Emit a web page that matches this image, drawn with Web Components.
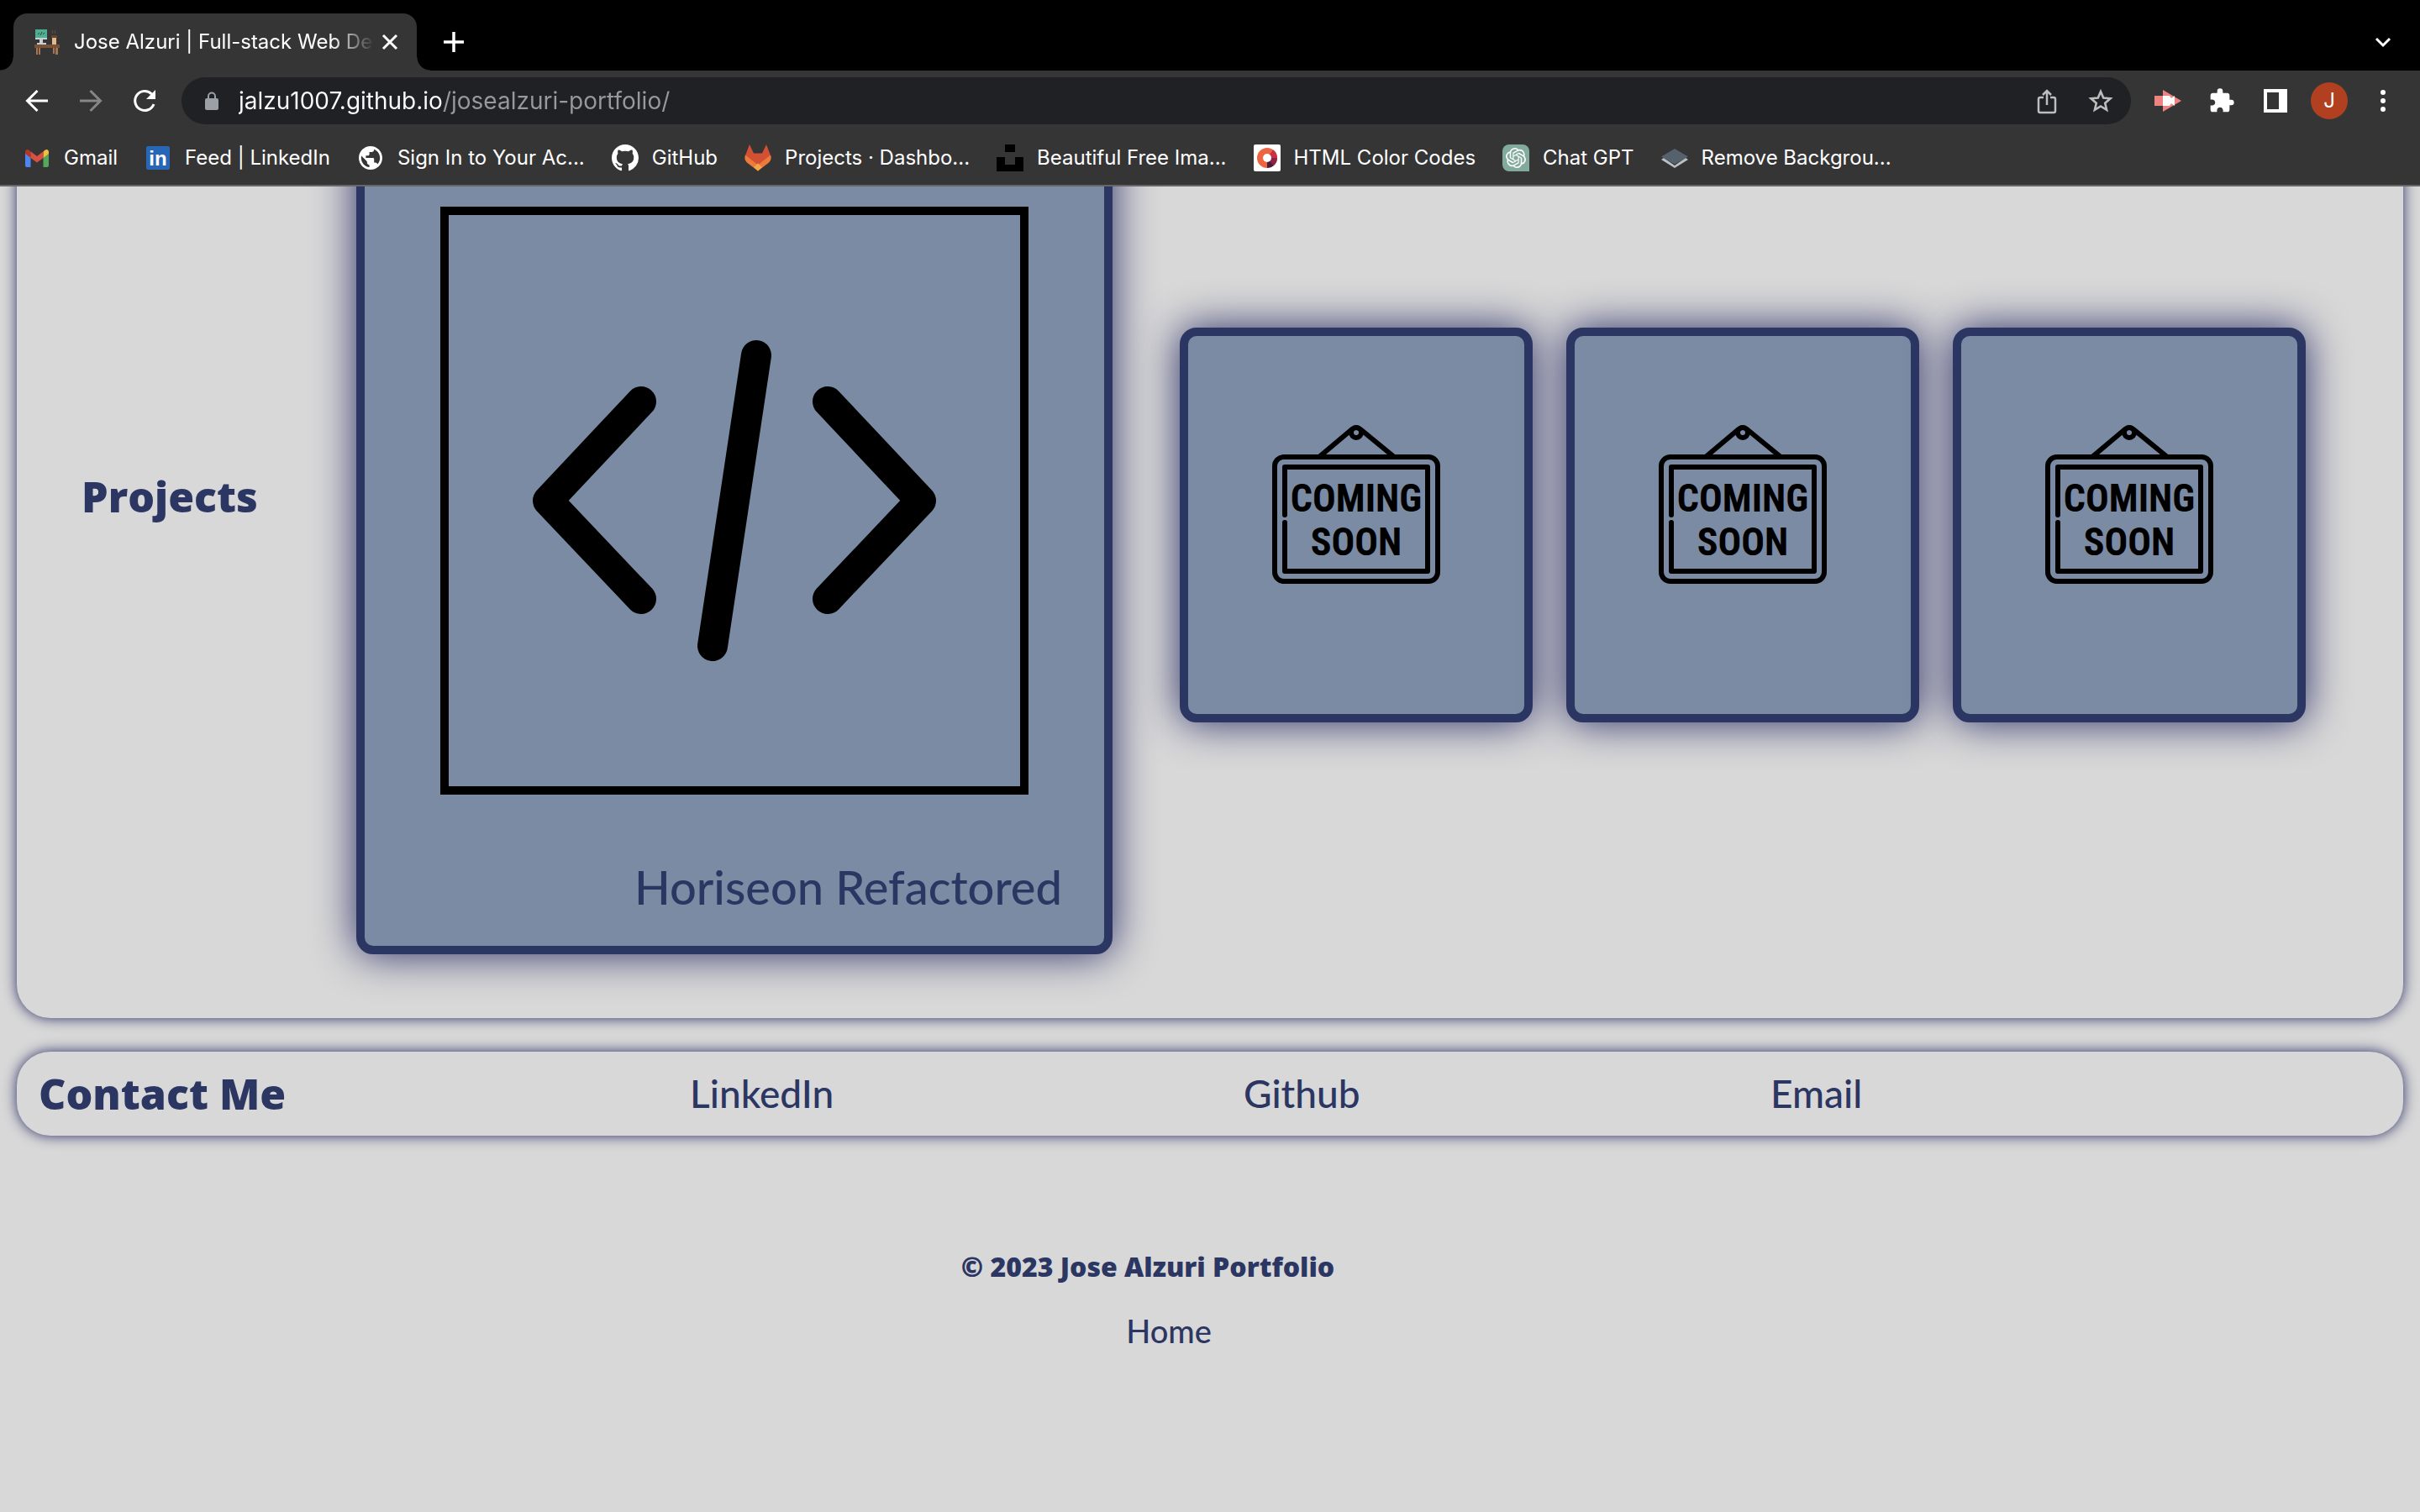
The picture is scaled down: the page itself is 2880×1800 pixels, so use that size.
<!DOCTYPE html>
<html lang="en">
<head>
<meta charset="utf-8">
<title>Jose Alzuri | Full-stack Web Developer</title>
<style>
  html, body { margin: 0; height: 100%; }
  body { font-family: Inter, "Liberation Sans", sans-serif; background: #d8d8d8; }
</style>
</head>
<body>
<browser-window>
  <tab-strip slot="chrome"></tab-strip>
  <browser-toolbar slot="chrome"></browser-toolbar>
  <bookmark-bar slot="chrome">
    <bookmark-link label="Gmail">
      <svg width="32" height="32" viewBox="0 0 32 32"><path fill="#4e86ee" d="M2 9l6.500 5v13H4a2 2 0 0 1-2-2z"/><path fill="#56a75b" d="M30 9l-6.500 5v13H28a2 2 0 0 0 2-2z"/><path fill="#f3bf42" d="M23.500 8.500l2-1.700C27.500 5.200 30 6.500 30 9v2l-6.500 5z"/><path fill="#b53629" d="M8.500 8.500l-2-1.700C4.500 5.200 2 6.500 2 9v2l6.500 5z"/><path fill="#d8503f" d="M8.500 8.300L16 14l7.500-5.700V16L16 21.600 8.500 16z"/></svg>
    </bookmark-link>
    <bookmark-link label="Feed | LinkedIn">
      <svg width="32" height="32" viewBox="0 0 32 32"><rect x="2" y="2" width="28" height="28" rx="2" fill="#2867b8"/><text x="16" y="25" text-anchor="middle" font-family="Liberation Sans, sans-serif" font-weight="700" font-size="24" fill="#fff">in</text></svg>
    </bookmark-link>
    <bookmark-link label="Sign In to Your Ac...">
      <svg width="32" height="32" viewBox="0.570 0.570 22.860 22.860"><path fill="#fff" d="M12 2C6.480 2 2 6.480 2 12s4.480 10 10 10 10-4.480 10-10S17.520 2 12 2zm-1 17.930c-3.950-.490-7-3.850-7-7.930 0-.620.080-1.210.210-1.790L9 15v1c0 1.100.900 2 2 2v1.930zm6.900-2.540c-.260-.810-1-1.390-1.900-1.390h-1v-3c0-.550-.450-1-1-1H8v-2h2c.550 0 1-.450 1-1V7h2c1.100 0 2-.900 2-2v-.410c2.930 1.190 5 4.060 5 7.410 0 2.080-.800 3.970-2.100 5.390z"/></svg>
    </bookmark-link>
    <bookmark-link label="GitHub">
      <svg width="32" height="32" viewBox="0 0 16 16"><path fill="#fff" d="M8 0C3.580 0 0 3.580 0 8c0 3.540 2.290 6.530 5.470 7.590.4.070.55-.17.55-.38 0-.19-.01-.82-.01-1.490-2.010.37-2.530-.49-2.690-.94-.09-.23-.48-.94-.82-1.130-.28-.15-.68-.52-.01-.53.63-.01 1.080.58 1.230.82.72 1.210 1.870.87 2.330.66.070-.52.280-.87.510-1.070-1.780-.2-3.640-.89-3.640-3.950 0-.87.310-1.590.820-2.150-.08-.2-.36-1.020.080-2.120 0 0 .67-.21 2.200.82.640-.18 1.320-.27 2-.27s1.360.09 2 .27c1.530-1.040 2.200-.82 2.200-.82.440 1.100.160 1.920.080 2.120.510.560.820 1.270.820 2.150 0 3.070-1.870 3.750-3.650 3.950.290.250.540.730.540 1.480 0 1.070-.01 1.930-.01 2.200 0 .210.150.460.550.380A8.010 8.010 0 0 0 16 8c0-4.420-3.580-8-8-8z"/></svg>
    </bookmark-link>
    <bookmark-link label="Projects · Dashbo...">
      <svg width="32" height="32" viewBox="0 0 32 32"><path fill="#d35033" d="M6 0l5 10.500h10L26 0l5 13L16 24 1 13z"/><path fill="#ed7a3a" d="M1 12.500c-1.500 4 0 7.500 2.500 9.500L16 31.500 28.500 22c2.500-2 4-5.500 2.500-9.500L16 24z"/><path fill="#d35033" d="M6 12h20L16 24z"/><path fill="#f3a64a" d="M16 22.500l5 4.500-5 4.500-5-4.500z"/></svg>
    </bookmark-link>
    <bookmark-link label="Beautiful Free Ima...">
      <svg width="32" height="32" viewBox="0 0 32 32"><path d="M10 0h12v9H10zM0 15h10v9h12v-9h10v17H0z"/></svg>
    </bookmark-link>
    <bookmark-link label="HTML Color Codes">
      <svg width="32" height="32" viewBox="0 0 32 32"><rect width="32" height="32" rx="2" fill="#fff"/><circle cx="16" cy="16" r="12" fill="#ec6440"/><path fill="#c93046" d="M16 16l7-9.700A12 12 0 0 1 28 16z"/><path fill="#8c2343" d="M16 16h12a12 12 0 0 1-4 9z"/><path fill="#4b1a3f" d="M16 16l8 9a12 12 0 0 1-8 3z"/><circle cx="16" cy="16" r="5" fill="#fff"/></svg>
    </bookmark-link>
    <bookmark-link label="Chat GPT">
      <svg width="32" height="32" viewBox="0 0 32 32"><path fill="#82aa9d" d="M8 0h16a8 8 0 0 1 8 8v24H8a8 8 0 0 1-8-8V8a8 8 0 0 1 8-8z"/><path transform="translate(4 4)" fill="#fff" d="M22.2819 9.8211a5.9847 5.9847 0 0 0-.5157-4.9108 6.0462 6.0462 0 0 0-6.5098-2.9A6.0651 6.0651 0 0 0 4.9807 4.1818a5.9847 5.9847 0 0 0-3.9977 2.9 6.0462 6.0462 0 0 0 .7427 7.0966 5.98 5.98 0 0 0 .511 4.9107 6.051 6.051 0 0 0 6.5146 2.9001A5.9847 5.9847 0 0 0 13.2599 24a6.0557 6.0557 0 0 0 5.7718-4.2058 5.9894 5.9894 0 0 0 3.9977-2.9001 6.0557 6.0557 0 0 0-.7475-7.0729zm-9.022 12.6081a4.4755 4.4755 0 0 1-2.8764-1.0408l.1419-.0804 4.7783-2.7582a.7948.7948 0 0 0 .3927-.6813v-6.7369l2.02 1.1686a.071.071 0 0 1 .038.052v5.5826a4.504 4.504 0 0 1-4.4945 4.4944zm-9.6607-4.1254a4.4708 4.4708 0 0 1-.5346-3.0137l.142.0852 4.783 2.7582a.7712.7712 0 0 0 .7806 0l5.8428-3.3685v2.3324a.0804.0804 0 0 1-.0332.0615L9.74 19.9502a4.4992 4.4992 0 0 1-6.1408-1.6464zM2.3408 7.8956a4.485 4.485 0 0 1 2.3655-1.9728V11.6a.7664.7664 0 0 0 .3879.6765l5.8144 3.3543-2.0201 1.1685a.0757.0757 0 0 1-.071 0l-4.8303-2.7865A4.504 4.504 0 0 1 2.3408 7.872zm16.5963 3.8558L13.1038 8.364 15.1192 7.2a.0757.0757 0 0 1 .071 0l4.8303 2.7913a4.4944 4.4944 0 0 1-.6765 8.1042v-5.6772a.79.79 0 0 0-.407-.667zm2.0107-3.0231l-.142-.0852-4.7735-2.7818a.7759.7759 0 0 0-.7854 0L9.409 9.2297V6.8974a.0662.0662 0 0 1 .0284-.0615l4.8303-2.7866a4.4992 4.4992 0 0 1 6.6802 4.66zM8.3065 12.863l-2.02-1.1638a.0804.0804 0 0 1-.038-.0567V6.0742a4.4992 4.4992 0 0 1 7.3757-3.4537l-.142.0805L8.704 5.459a.7948.7948 0 0 0-.3927.6813zm1.0976-2.3654l2.602-1.4998 2.6069 1.4998v2.9994l-2.5974 1.4997-2.6067-1.4997Z"/></svg>
    </bookmark-link>
    <bookmark-link label="Remove Backgrou...">
      <svg width="32" height="32" viewBox="0 0 32 32"><path fill="#b9bfc4" d="M0 18l3-2 13 9 13-9 3 2-16 10z"/><path fill="#56616e" d="M16 5l16 9.500L16 23.500 0 14.500z"/></svg>
    </bookmark-link>
  </bookmark-bar>

  <project-section heading="Projects">
    <project-card size="large" caption="Horiseon Refactored">
      <svg viewBox="0 0 700 700" role="img" aria-label="Code">
        <rect x="5" y="5" width="690" height="690" fill="none" stroke="#000" stroke-width="10"/>
        <path d="M239 232L128 350l111 117M461 232l111 118-111 117M376 177l-52 346" fill="none" stroke="#000" stroke-width="36" stroke-linecap="round" stroke-linejoin="round"/>
      </svg>
    </project-card>
    <project-card><coming-soon-sign></coming-soon-sign></project-card>
    <project-card><coming-soon-sign></coming-soon-sign></project-card>
    <project-card><coming-soon-sign></coming-soon-sign></project-card>
  </project-section>
  <contact-section heading="Contact Me">
    <a href="#linkedin">LinkedIn</a>
    <a href="#github">Github</a>
    <a href="#email">Email</a>
  </contact-section>
  <site-footer>
    <span>© 2023 Jose Alzuri Portfolio</span>
    <a slot="link" href="#home">Home</a>
  </site-footer>
</browser-window>

<script>
const define = (name, html, setup) => {
  const template = document.createElement('template');
  template.innerHTML = html;
  customElements.define(name, class extends HTMLElement {
    constructor() {
      super();
      this.attachShadow({ mode: 'open' }).append(template.content.cloneNode(true));
    }
    connectedCallback() { if (setup) setup(this, this.shadowRoot); }
  });
};

define('browser-window', `
<style>
  :host { display: flex; flex-direction: column; height: 100vh; overflow: hidden; background: #d8d8d8;
    --navy: #2b3663; --steel: #7a8ba3; --shade: #2b2f66;
    --page-font: Lato, "Liberation Sans", sans-serif; --heading-font: "Open Sans", "Liberation Sans", sans-serif; }
  header { flex: none; border-bottom: 2px solid #666; background: #353535; color: #fff; }
  main { flex: 1; min-height: 0; overflow: hidden; color: var(--navy); font-family: var(--page-font); font-weight: 500; }
</style>
<header><slot name="chrome"></slot></header>
<main><slot></slot></main>`);

define('tab-strip', `
<style>
  :host { display: flex; align-items: flex-end; height: 84px; background: #000; }
  .foot { flex: none; width: 16px; height: 16px; background: radial-gradient(circle at 0 0, #000 15px, #353535 16px); }
  .foot.right { background: radial-gradient(circle at 100% 0, #000 15px, #353535 16px); }
  .tab { display: flex; align-items: center; box-sizing: border-box; width: 480px; height: 68px; padding: 0 20px 0 24px; border-radius: 16px 16px 0 0; background: #353535; }
  .title { flex: 1; margin: 0 4px 0 16px; white-space: nowrap; font-size: 24px; line-height: 32px;
    mask-image: linear-gradient(90deg, #000 305px, transparent 358px); }
  button { display: flex; align-items: center; justify-content: center; padding: 0; border: 0; background: none; color: #fff; }
  .close { width: 24px; height: 24px; }
  .new, .search { width: 56px; height: 68px; }
  .search { margin: 0 16px 0 auto; }
</style>
<span class="foot"></span>
<div class="tab">
  <svg width="32" height="32" viewBox="0 0 32 32"><rect x="2" y="1" width="14" height="10" fill="#4fae91"/><path d="M5 7l2-2M8 8l2-4M11 7l2-2" stroke="#23483d" fill="none"/><path fill="#c9ced3" d="M2 11h14v2H2zM7 13h4v4H7zM4 17h11v2H4z"/><rect x="22" y="9" width="5" height="10" fill="#e0b98c"/><path fill="#6d4327" d="M21 8h7v3h-7z"/><path d="M23 2q-2 2 0 4M26 2q-2 2 0 4" stroke="#555" fill="none"/><path fill="#7b5236" d="M1 19h30v4H1z"/><path fill="#a67652" d="M3 23h2v8H3zM6 23h2v8H6zM23 23h2v7h-2zM26 23h3v8h-3z"/></svg>
  <span class="title">Jose Alzuri | Full-stack Web De</span>
  <button class="close" aria-label="Close tab"><svg width="24" height="24" viewBox="0 0 24 24"><path d="M4 4l16 16M20 4L4 20" stroke="currentColor" stroke-width="3"/></svg></button>
</div>
<span class="foot right"></span>
<button class="new" aria-label="New tab"><svg width="28" height="28" viewBox="0 0 28 28"><path d="M14 2v24M2 14h24" stroke="currentColor" stroke-width="3.500"/></svg></button>
<button class="search" aria-label="Search tabs"><svg width="24" height="24" viewBox="0 0 24 24"><path d="M4 8l8 8 8-8" fill="none" stroke="currentColor" stroke-width="3"/></svg></button>`);

define('browser-toolbar', `
<style>
  :host { display: flex; align-items: center; height: 72px; padding: 0 12px; }
  button { flex: none; display: flex; align-items: center; justify-content: center; width: 64px; height: 64px; padding: 0; border: 0; background: none; color: #fff; font: 24px/32px Inter, sans-serif; }
  .forward { color: #868686; }
  form { flex: 1; display: flex; align-items: center; height: 56px; margin: 0 12px; border-radius: 28px; background: #202124; }
  form .lock { margin: 0 22px 0 26px; }
  form button { color: #bdbdbd; height: 56px; }
  form button:last-child { margin-right: 4px; }
  input { flex: 1; min-width: 0; height: 40px; padding: 0; border: 0; outline: 0; font: 28px/40px Inter, sans-serif;
    color: #fff; -webkit-text-fill-color: transparent; background: linear-gradient(90deg, #fff 244px, #97999c 244px); background-clip: text; -webkit-background-clip: text; }
  .avatar span { width: 44px; height: 44px; border-radius: 50%; background: #b04020; line-height: 44px; }
</style>
<button aria-label="Back"><svg width="32" height="32" viewBox="0 0 32 32"><path d="M29 16H5M16.500 4L4.500 16l12 12" fill="none" stroke="currentColor" stroke-width="3"/></svg></button>
<button class="forward" aria-label="Forward"><svg width="32" height="32" viewBox="0 0 32 32"><path d="M3 16h24M15.500 4l12 12-12 12" fill="none" stroke="currentColor" stroke-width="3"/></svg></button>
<button aria-label="Reload"><svg width="32" height="32" viewBox="0 0 32 32"><path d="M27 20A11.500 11.500 0 1 1 24.500 8" fill="none" stroke="currentColor" stroke-width="3"/><path d="M29 3v11H18z" fill="currentColor"/></svg></button>
<form>
  <svg class="lock" width="20" height="24" viewBox="0 0 20 24"><path fill="#9aa0a6" d="M4 9h12a2 2 0 0 1 2 2v10a2 2 0 0 1-2 2H4a2 2 0 0 1-2-2V11a2 2 0 0 1 2-2z"/><path d="M6 10V6.500a4 4 0 0 1 8 0V10" fill="none" stroke="#9aa0a6" stroke-width="2"/></svg>
  <input type="text" aria-label="Address" value="jalzu1007.github.io/josealzuri-portfolio/" spellcheck="false">
  <button type="button" aria-label="Share"><svg width="32" height="32" viewBox="0 0 32 32"><path d="M12 12H8a2 2 0 0 0-2 2v14a2 2 0 0 0 2 2h16a2 2 0 0 0 2-2V14a2 2 0 0 0-2-2h-4M16 21V4M11 9l5-5 5 5" fill="none" stroke="currentColor" stroke-width="2.500"/></svg></button>
  <button type="button" aria-label="Bookmark this page"><svg width="32" height="32" viewBox="0 0 32 32"><path d="M16 5l3.200 7.600 8.300.7-6.300 5.400 1.900 8.100-7.100-4.300-7.100 4.300 1.900-8.100-6.300-5.400 8.300-.7z" fill="none" stroke="currentColor" stroke-width="2.600"/></svg></button>
</form>
<button aria-label="Screen recorder"><svg width="32" height="32" viewBox="0 0 32 32"><path fill="#ee8481" d="M0 10h10V3l22 13-22 13v-7H0z"/><path fill="#fff" d="M10 10h8l2 3 4-3v12l-4-3-2 3h-8z"/></svg></button>
<button aria-label="Extensions"><svg width="32" height="32" viewBox="0 0 24 24"><path fill="currentColor" d="M20.500 11H19V7c0-1.100-.9-2-2-2h-4V3.500a2.500 2.500 0 0 0-5 0V5H4c-1.100 0-1.990.9-1.990 2v3.800H3.500c1.490 0 2.700 1.210 2.700 2.700s-1.210 2.700-2.700 2.700H2V20c0 1.100.9 2 2 2h3.800v-1.500c0-1.490 1.210-2.700 2.700-2.700s2.700 1.210 2.700 2.700V22H17c1.100 0 2-.9 2-2v-4h1.500a2.500 2.500 0 0 0 0-5z"/></svg></button>
<button aria-label="Side panel"><svg width="28" height="28" viewBox="0 0 28 28"><path fill="currentColor" fill-rule="evenodd" d="M0 0h28v28H0zM4 4v20h14V4z"/></svg></button>
<button class="avatar" aria-label="Profile"><span>J</span></button>
<button aria-label="Menu"><svg width="32" height="32" viewBox="0 0 32 32" fill="currentColor"><circle cx="16" cy="6" r="3"/><circle cx="16" cy="16" r="3"/><circle cx="16" cy="26" r="3"/></svg></button>`);

define('bookmark-bar', `
<style>:host { display: block; } nav { display: flex; align-items: center; gap: 32px; height: 64px; padding: 0 28px; }</style>
<nav aria-label="Bookmarks"><slot></slot></nav>`);

define('bookmark-link', `
<style>
  :host { display: block; }
  a { display: flex; align-items: center; gap: 16px; color: #fff; text-decoration: none; white-space: nowrap; font-size: 24px; line-height: 32px; }
  ::slotted(svg) { display: block; flex: none; }
</style>
<a href="#"><slot></slot><span></span></a>`, (host, root) => { root.querySelector('span').textContent = host.getAttribute('label'); });

define('project-section', `
<style>
  :host { display: block; margin: -184px 20px 0; }
  section { display: grid; grid-template-columns: 364px 940fr 420fr 420fr 420fr; column-gap: 40px; align-items: center; padding: 76px 116px 76px 0; border-radius: 40px; box-shadow: 0 0 16px var(--shade); background: #d8d8d8; }
  h2 { margin: 0 0 68px; text-align: center; font: 800 50px/60px var(--heading-font); }
  ::slotted(project-card[size="large"]) { margin-right: 40px; }
</style>
<section><h2></h2><slot></slot></section>`, (host, root) => { root.querySelector('h2').textContent = host.getAttribute('heading'); });

define('project-card', `
<style>
  :host { display: block; box-sizing: border-box; padding: 100px 100px 150px; border: 10px solid var(--navy); border-radius: 20px; background: var(--steel); box-shadow: 0 0 50px var(--shade); }
  :host([size="large"]) { padding: 122px 90px 32px; }
  ::slotted(*) { display: block; width: 100%; }
  p { margin: 72px -40px 0 0; text-align: right; font-size: 56px; line-height: 76px; }
  p:empty { display: none; }
</style>
<slot></slot><p></p>`, (host, root) => { root.querySelector('p').textContent = host.getAttribute('caption') || ''; });

define('coming-soon-sign', `
<style>:host { display: block; } svg { display: block; width: 100%; }</style>
<svg viewBox="0 0 200 200" fill="none" stroke="#000" stroke-width="6" stroke-linecap="round" stroke-linejoin="round">
  <rect x="3" y="44" width="194" height="148" rx="11"/>
  <path d="M15 113V56h170v124H15v-58"/>
  <path d="M57 43L95 11q5-4 10 0l39 32"/><circle cx="100" cy="15" r="6"/>
  <g fill="#000" stroke="none" text-anchor="middle" font-family="Liberation Sans Narrow, Roboto Condensed, Roboto, sans-serif" font-weight="700" font-size="46">
    <text x="100" y="109">COMING</text><text x="100" y="161">SOON</text>
  </g>
</svg>`);

define('contact-section', `
<style>
  :host { display: block; margin: 40px 20px 0; }
  section { display: grid; grid-template-columns: 775fr 659fr 627fr 753fr; align-items: center; height: 100px; padding-left: 26px; border-radius: 40px; box-shadow: 0 0 16px var(--shade); background: #d8d8d8; }
  h2 { margin: 0; font: 800 50px/60px var(--heading-font); }
  ::slotted(a) { font-size: 46px; line-height: 60px; color: inherit; text-decoration: none; }
</style>
<section><h2></h2><slot></slot></section>`, (host, root) => { root.querySelector('h2').textContent = host.getAttribute('heading'); });

define('site-footer', `
<style>
  :host { display: block; padding: 136px 148px 0 0; text-align: center; }
  h4 { margin: 0; font: 800 32px/40px var(--heading-font); }
  p { margin: 32px 0 0 50px; font-size: 38px; line-height: 48px; }
  ::slotted(a) { color: inherit; text-decoration: none; }
</style>
<footer><h4><slot></slot></h4><p><slot name="link"></slot></p></footer>`);
</script>
</body>
</html>
